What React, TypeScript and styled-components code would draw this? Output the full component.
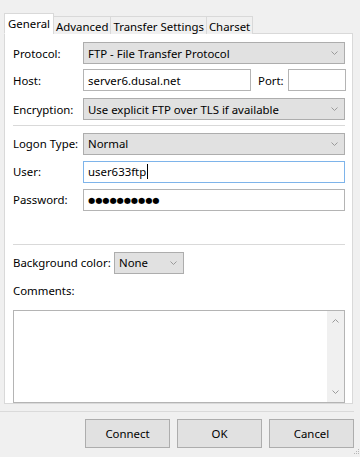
import React from 'react'
import styled, { createGlobalStyle } from 'styled-components'

const FONT = `'Noto Sans', 'Segoe UI', Arial, sans-serif`

const GlobalStyle = createGlobalStyle`
  html, body {
    margin: 0;
    padding: 0;
    background: #f0f0f0;
  }
  body {
    font-family: ${FONT};
    font-size: 11.4px;
    color: #000;
  }
`

const Chevron = ({ up = false }: { up?: boolean }) => (
  <svg width="7" height="4" viewBox="0 0 7 4" fill="none">
    <polyline
      points={up ? '0.5,3.5 3.5,0.5 6.5,3.5' : '0.5,0.5 3.5,3.5 6.5,0.5'}
      stroke="#9a9a9a"
      strokeWidth="1"
    />
  </svg>
)

export default function App() {
  return (
    <>
      <GlobalStyle />
      <Window>
        <TabStrip>
          <Tab $active>General</Tab>
          <Tab>Advanced</Tab>
          <Tab>Transfer Settings</Tab>
          <Tab>Charset</Tab>
        </TabStrip>
        <Panel>
          <Row $mt={8}>
            <Label>Protocol:</Label>
            <Select>
              <span>FTP - File Transfer Protocol</span>
              <Chevron />
            </Select>
          </Row>
          <Row $mt={5}>
            <Label>Host:</Label>
            <HostLine>
              <Input $width={168}>server6.dusal.net</Input>
              <PortLabel>Port:</PortLabel>
              <Input $width={58} />
            </HostLine>
          </Row>
          <Row $mt={7}>
            <Label>Encryption:</Label>
            <Select>
              <span>Use explicit FTP over TLS if available</span>
              <Chevron />
            </Select>
          </Row>
          <Separator $mt={5} />
          <Row $mt={7}>
            <Label>Logon Type:</Label>
            <Select>
              <span>Normal</span>
              <Chevron />
            </Select>
          </Row>
          <Row $mt={6}>
            <Label>User:</Label>
            <Input $focused>
              user633ftp
              <Caret />
            </Input>
          </Row>
          <Row $mt={6}>
            <Label>Password:</Label>
            <Input>
              <Dots>●●●●●●●●●●</Dots>
            </Input>
          </Row>
          <Separator $mt={33} />
          <Row $mt={7}>
            <BgLabel>Background color:</BgLabel>
            <Select $width={70}>
              <span>None</span>
              <Chevron />
            </Select>
          </Row>
          <CommentsLabel>Comments:</CommentsLabel>
          <TextArea>
            <Scrollbar>
              <Chevron up />
              <Chevron />
            </Scrollbar>
          </TextArea>
        </Panel>
        <BottomSeparator />
        <ButtonBar>
          <Button>Connect</Button>
          <Button>OK</Button>
          <Button>Cancel</Button>
        </ButtonBar>
        <Grip>
          <svg width="10" height="10" viewBox="0 0 10 10">
            <rect x="8" y="2" width="1" height="1" fill="#b8b8b8" />
            <rect x="6" y="4" width="1" height="1" fill="#b8b8b8" />
            <rect x="8" y="4" width="1" height="1" fill="#b8b8b8" />
            <rect x="4" y="6" width="1" height="1" fill="#b8b8b8" />
            <rect x="6" y="6" width="1" height="1" fill="#b8b8b8" />
            <rect x="8" y="6" width="1" height="1" fill="#b8b8b8" />
          </svg>
        </Grip>
      </Window>
    </>
  )
}

const Window = styled.div`
  position: relative;
  box-sizing: border-box;
  width: 360px;
  height: 457px;
  padding-top: 13px;
  background: #f0f0f0;
  font-family: ${FONT};
  font-size: 11.4px;
  overflow: hidden;
`

const TabStrip = styled.div`
  display: flex;
  align-items: flex-end;
  padding-left: 4px;
  height: 21px;
  position: relative;
  z-index: 1;
`

const Tab = styled.div<{ $active?: boolean }>`
  box-sizing: border-box;
  height: ${({ $active }) => ($active ? '21px' : '18px')};
  padding: 0 ${({ $active }) => ($active ? '3px' : '2px')};
  margin-left: ${({ $active }) => ($active ? '0' : '-1px')};
  display: flex;
  align-items: center;
  padding-top: ${({ $active }) => ($active ? '0' : '1px')};
  background: ${({ $active }) => ($active ? '#fff' : '#f0f0f0')};
  border: 1px solid #d9d9d9;
  border-bottom: ${({ $active }) => ($active ? '1px solid #fff' : 'none')};
  white-space: nowrap;
  &:first-child {
    margin-left: 0;
  }
`

const Panel = styled.div`
  box-sizing: border-box;
  margin: -1px 0 0 4px;
  width: 349px;
  height: 371px;
  padding: 0 7px 0 8px;
  background: #fff;
  border: 1px solid #d9d9d9;
  display: flex;
  flex-direction: column;
`

const Row = styled.div<{ $mt: number }>`
  display: flex;
  align-items: center;
  margin-top: ${({ $mt }) => $mt}px;
  height: 22px;
`

const Label = styled.div`
  width: 70px;
  flex: none;
  white-space: nowrap;
`

const BgLabel = styled.div`
  width: 101px;
  flex: none;
  white-space: nowrap;
`

const Select = styled.div<{ $width?: number }>`
  box-sizing: border-box;
  height: 22px;
  ${({ $width }) => ($width ? `width: ${$width}px;` : 'flex: 1;')}
  display: flex;
  align-items: center;
  justify-content: space-between;
  padding: 0 6px 0 4px;
  background: #e1e1e1;
  border: 1px solid #adadad;
  white-space: nowrap;
`

const HostLine = styled.div`
  display: flex;
  align-items: center;
  flex: 1;
  height: 22px;
`

const PortLabel = styled.div`
  margin: 0 0 0 7px;
  width: 30px;
`

const Input = styled.div<{ $width?: number; $focused?: boolean }>`
  box-sizing: border-box;
  height: 22px;
  ${({ $width }) => ($width ? `width: ${$width}px;` : 'flex: 1;')}
  display: flex;
  align-items: center;
  padding: 0 4px;
  background: #fff;
  border: 1px solid ${({ $focused }) => ($focused ? '#7eb4ea' : '#b4b4b4')};
  white-space: nowrap;
`

const Caret = styled.span`
  display: inline-block;
  width: 1px;
  height: 15px;
  background: #000;
  margin-left: 1px;
`

const Dots = styled.span`
  font-size: 8.2px;
  letter-spacing: 0;
  font-family: 'DejaVu Sans', sans-serif;
`

const Separator = styled.div<{ $mt: number }>`
  height: 1px;
  background: #d9d9d9;
  margin-top: ${({ $mt }) => $mt}px;
`

const CommentsLabel = styled.div`
  margin-top: 8px;
  height: 17px;
  line-height: 17px;
`

const TextArea = styled.div`
  box-sizing: border-box;
  margin-top: 11px;
  height: 94px;
  border: 1px solid #b4b4b4;
  background: #fff;
  display: flex;
  justify-content: flex-end;
`

const Scrollbar = styled.div`
  width: 17px;
  background: #f0f0f0;
  display: flex;
  flex-direction: column;
  align-items: center;
  justify-content: space-between;
  padding: 8px 0;
`

const BottomSeparator = styled.div`
  margin: 7px 6px 0 0;
  height: 1px;
  background: #dadada;
`

const ButtonBar = styled.div`
  display: flex;
  justify-content: flex-end;
  gap: 7px;
  margin-top: 7px;
  padding-right: 6px;
`

const Button = styled.div`
  box-sizing: border-box;
  width: 85px;
  height: 29px;
  display: flex;
  align-items: center;
  justify-content: center;
  background: #e1e1e1;
  border: 1px solid #adadad;
`

const Grip = styled.div`
  position: absolute;
  right: 0;
  bottom: 0;
  line-height: 0;
`
